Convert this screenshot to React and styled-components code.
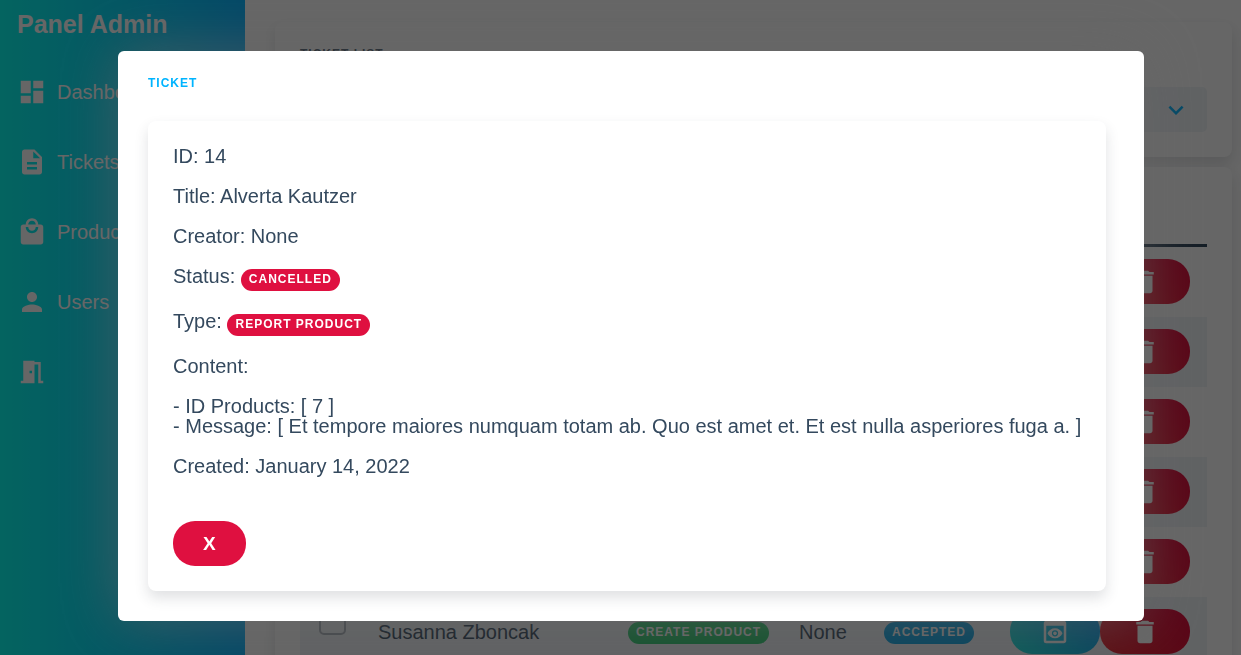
import React from "react";
import styled, { createGlobalStyle } from "styled-components";
import {
  MdDashboard,
  MdDelete,
  MdDescription,
  MdExpandMore,
  MdLocalMall,
  MdMeetingRoom,
  MdPerson,
  MdPreview,
} from "react-icons/md";

const colors = {
  text: "#34495e",
  blue: "#00b4ff",
  red: "#df1040",
  stripe: "#f0f4f8",
};

const tones = { red: colors.red, green: "#2ecc71", blue: "#0aa5e6" };

const GlobalStyle = createGlobalStyle`
  *, *::before, *::after { box-sizing: border-box; }
  body {
    margin: 0;
    overflow: hidden;
    background: #fff;
    color: ${colors.text};
    font: 20px/20px "Liberation Sans", Arial, sans-serif;
  }
  button, select, input { font: inherit; color: inherit; }
`;

const Layout = styled.div`
  display: flex;
  height: 100vh;
  overflow: hidden;
`;

const Sidebar = styled.aside`
  flex: 0 0 245px;
  padding: 10px 17px;
  color: #fff;
  background: linear-gradient(to right, #0afaf0, #0ab4ff);
`;

const Brand = styled.h1`
  margin: 0 0 39px;
  font-size: 25px;
  line-height: 28px;
`;

const NavList = styled.nav`
  display: flex;
  flex-direction: column;
  gap: 40px;
`;

const NavLink = styled.a`
  display: flex;
  align-items: center;
  gap: 10px;
  color: inherit;
  text-decoration: none;
`;

const Main = styled.main`
  flex: 1;
  min-width: 0;
  padding: 22px 9px 22px 30px;
`;

const Card = styled.section`
  padding: 25px;
  border-radius: 8px;
  background: #fff;
  box-shadow: 0 7px 14px rgba(44, 52, 70, 0.15);
  & + & { margin-top: 10px; }
`;

const Heading = styled.h2`
  margin: 0;
  color: ${(p) => (p.$accent ? colors.blue : colors.text)};
  font-size: 12px;
  line-height: 15px;
  letter-spacing: 1px;
  text-transform: uppercase;
`;

const SelectBox = styled.div`
  display: grid;
  align-items: center;
  margin-top: 25px;
  border-radius: 5px;
  background: ${colors.stripe};
  & > * { grid-area: 1 / 1; }
  & > svg {
    justify-self: end;
    margin-right: 16px;
    color: ${colors.blue};
    pointer-events: none;
  }
`;

const Select = styled.select`
  width: 100%;
  height: 45px;
  padding: 0 17px;
  border: 0;
  background: transparent;
  appearance: none;
`;

const Table = styled.table`
  width: 100%;
  table-layout: fixed;
  border-collapse: separate;
  border-spacing: 0;
`;

const Col = styled.col`
  width: ${(p) => p.$width};
`;

const Th = styled.th`
  height: 55px;
  padding: 0;
  border-bottom: 3px solid ${colors.text};
`;

const Row = styled.tr`
  &:nth-child(even) { background: ${colors.stripe}; }
`;

const Td = styled.td`
  height: 70px;
  padding: 0 17px 1px;
  white-space: nowrap;
  &:first-child { padding-left: 19px; }
`;

const Checkbox = styled.input`
  display: block;
  width: 27px;
  height: 27px;
  margin: 0 0 20px;
  border: 2px solid #a9b1bb;
  border-radius: 5px;
  appearance: none;
`;

const Badge = styled.span`
  display: inline-block;
  padding: 4px 8px 5px;
  border-radius: 11px;
  background: ${(p) => tones[p.$tone]};
  color: #fff;
  font-size: 12px;
  font-weight: bold;
  line-height: 13px;
  letter-spacing: 1px;
  text-transform: uppercase;
`;

const Actions = styled.div`
  display: flex;
`;

const ActionButton = styled.button`
  display: flex;
  align-items: center;
  justify-content: center;
  width: 90px;
  height: 45px;
  padding: 0;
  border: 0;
  border-radius: 22px;
  color: #fff;
  background: ${(p) =>
    p.$danger
      ? "linear-gradient(45deg, #e62832, #dc0a3c)"
      : "linear-gradient(45deg, #1ee6dc, #0a96f0)"};
`;

const Overlay = styled.div`
  position: fixed;
  inset: 0;
  display: flex;
  align-items: flex-start;
  padding: 51px 97px 34px 118px;
  background: rgba(0, 0, 0, 0.6);
`;

const Dialog = styled.div`
  flex: 1;
  padding: 25px 38px 30px 30px;
  border-radius: 6px;
  background: #fff;
  box-shadow: 0 0 60px rgba(102, 102, 102, 0.6);
`;

const Details = styled(Card)`
  margin-top: 30px;
  padding-right: 24px;
`;

const Field = styled.p`
  margin: 0 0 20px;
`;

const CloseButton = styled.button`
  display: block;
  height: 45px;
  margin-top: 45px;
  padding: 0 30px;
  border: 0;
  border-radius: 22px;
  background: ${colors.red};
  color: #fff;
  font-size: 19px;
  font-weight: bold;
`;

const links = [
  { label: "Dashboard", Icon: MdDashboard },
  { label: "Tickets", Icon: MdDescription },
  { label: "Products", Icon: MdLocalMall },
  { label: "Users", Icon: MdPerson },
  { label: "", Icon: MdMeetingRoom },
];

const tickets = [
  {},
  {},
  {},
  {},
  {},
  {
    title: "Susanna Zboncak",
    type: "Create product",
    creator: "None",
    status: "Accepted",
  },
];

const columns = ["61px", "auto", "171px", "85px", "126px", "214px"];

export default function App() {
  return (
    <>
      <GlobalStyle />
      <Layout>
        <Sidebar>
          <Brand>Panel Admin</Brand>
          <NavList>
            {links.map(({ label, Icon }) => (
              <NavLink key={label} href="#" aria-label={label || "Exit"}>
                <Icon size={30} />
                {label}
              </NavLink>
            ))}
          </NavList>
        </Sidebar>
        <Main>
          <Card>
            <Heading>Ticket list</Heading>
            <SelectBox>
              <Select aria-label="Ticket filter" defaultValue="">
                <option value="" />
              </Select>
              <MdExpandMore size={30} />
            </SelectBox>
          </Card>
          <Card>
            <Table>
              <colgroup>
                {columns.map((width) => (
                  <Col key={width} $width={width} />
                ))}
              </colgroup>
              <thead>
                <tr>
                  {columns.map((width) => (
                    <Th key={width} />
                  ))}
                </tr>
              </thead>
              <tbody>
                {tickets.map(({ title, type, creator, status }, i) => (
                  <Row key={i}>
                    <Td>
                      <Checkbox type="checkbox" aria-label="Select ticket" />
                    </Td>
                    <Td>{title}</Td>
                    <Td>{type && <Badge $tone="green">{type}</Badge>}</Td>
                    <Td>{creator}</Td>
                    <Td>{status && <Badge $tone="blue">{status}</Badge>}</Td>
                    <Td>
                      <Actions>
                        <ActionButton type="button" aria-label="View">
                          <MdPreview size={30} />
                        </ActionButton>
                        <ActionButton type="button" $danger aria-label="Delete">
                          <MdDelete size={30} />
                        </ActionButton>
                      </Actions>
                    </Td>
                  </Row>
                ))}
              </tbody>
            </Table>
          </Card>
        </Main>
      </Layout>
      <Overlay>
        <Dialog role="dialog" aria-modal="true" aria-labelledby="dialog-title">
          <Heading $accent id="dialog-title">
            Ticket
          </Heading>
          <Details>
            <Field>ID: 14</Field>
            <Field>Title: Alverta Kautzer</Field>
            <Field>Creator: None</Field>
            <Field>
              Status: <Badge $tone="red">Cancelled</Badge>
            </Field>
            <Field>
              Type: <Badge $tone="red">Report product</Badge>
            </Field>
            <Field>Content:</Field>
            <Field>
              - ID Products: [ 7 ]
              <br />- Message: [ Et tempore maiores numquam totam ab. Quo est
              amet et. Et est nulla asperiores fuga a. ]
            </Field>
            <Field>Created: January 14, 2022</Field>
            <CloseButton type="button" aria-label="Close">
              X
            </CloseButton>
          </Details>
        </Dialog>
      </Overlay>
    </>
  );
}
